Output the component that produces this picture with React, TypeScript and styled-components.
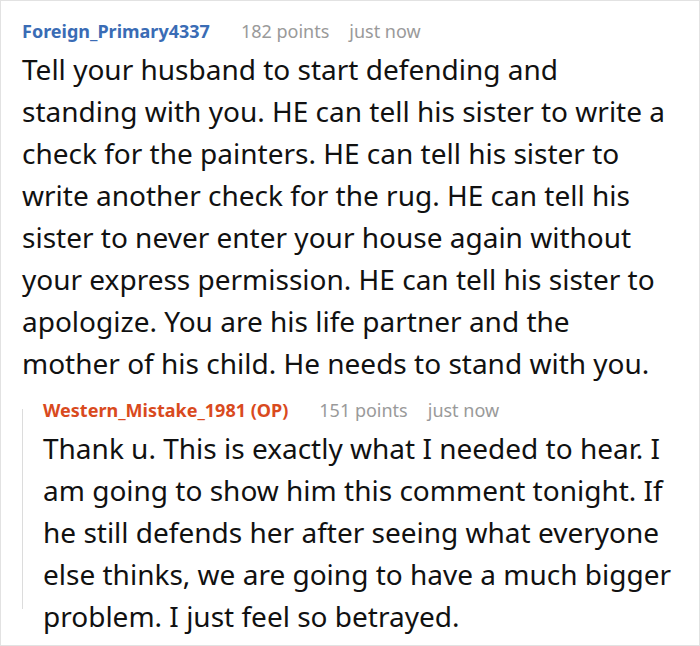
import { createGlobalStyle, styled } from 'styled-components'

const GlobalStyle = createGlobalStyle`
  html, body {
    margin: 0;
    padding: 0;
    background: #ffffff;
  }
  body {
    font-family: "Noto Sans", "Open Sans", sans-serif;
  }
`

const Card = styled.div`
  width: 700px;
  height: 646px;
  box-sizing: border-box;
  border: 1px solid #e2e2e2;
  padding: 17px 28px 0 21px;
  overflow: hidden;
`

const Meta = styled.div`
  display: flex;
  align-items: baseline;
  font-size: 18px;
  line-height: 26px;
  white-space: nowrap;
`

const Author = styled.span<{ $op?: boolean }>`
  font-weight: 700;
  color: ${p => (p.$op ? '#d94a1e' : '#3a6cb5')};
  margin-right: 31px;
`

const Info = styled.span`
  color: #9a9a9a;
  margin-right: 20px;
`

const Body = styled.p`
  margin: 4px 0 0;
  font-size: 28px;
  line-height: 42px;
  color: #111111;
`

const Reply = styled.div`
  position: relative;
  margin-top: 13px;
  padding-left: 21px;

  &::before {
    content: '';
    position: absolute;
    left: 0;
    top: 12px;
    bottom: 28px;
    width: 1px;
    background: #dcdcdc;
  }
`

type CommentProps = {
  author: string
  points: number
  time: string
  text: string
  op?: boolean
}

const Comment = ({ author, points, time, text, op }: CommentProps) => (
  <>
    <Meta>
      <Author $op={op}>{author}</Author>
      <Info>{points} points</Info>
      <Info>{time}</Info>
    </Meta>
    <Body>{text}</Body>
  </>
)

const App = () => {
  return (
    <>
      <GlobalStyle />
      <Card>
        <Comment
          author="Foreign_Primary4337"
          points={182}
          time="just now"
          text="Tell your husband to start defending and standing with you. HE can tell his sister to write a check for the painters. HE can tell his sister to write another check for the rug. HE can tell his sister to never enter your house again without your express permission. HE can tell his sister to apologize. You are his life partner and the mother of his child. He needs to stand with you."
        />
        <Reply>
          <Comment
            op
            author="Western_Mistake_1981 (OP)"
            points={151}
            time="just now"
            text="Thank u. This is exactly what I needed to hear. I am going to show him this comment tonight. If he still defends her after seeing what everyone else thinks, we are going to have a much bigger problem. I just feel so betrayed."
          />
        </Reply>
      </Card>
    </>
  )
}

export default App
